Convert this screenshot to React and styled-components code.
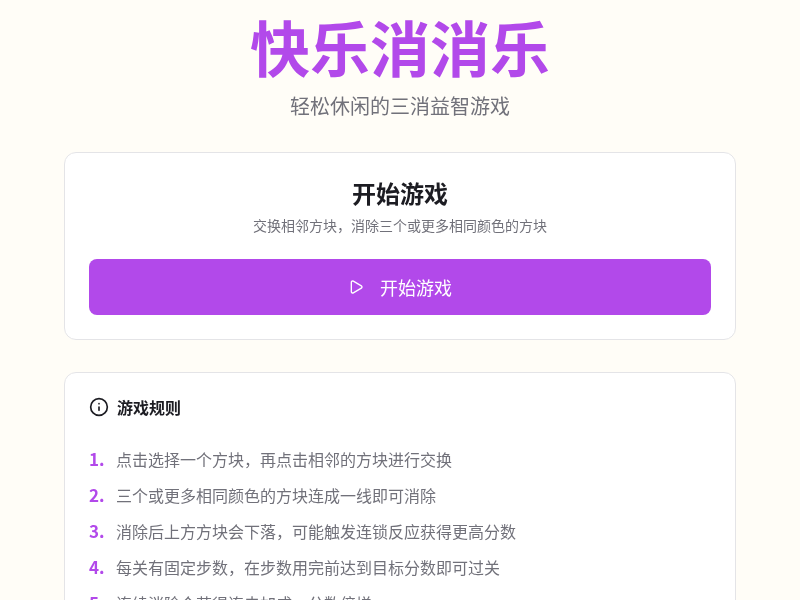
import styled, { createGlobalStyle } from "styled-components";
import { Play, Info } from "lucide-react";

const Global = createGlobalStyle`
    * { box-sizing: border-box; }
    html, body { margin: 0; padding: 0; }
    body {
        background: #fffdf7;
        color: #1c1c22;
        font-family: "Noto Sans CJK SC", "Noto Sans", sans-serif;
    }
`;

const Page = styled.main`
    display: flex;
    flex-direction: column;
    align-items: center;
    padding: 16px 0 32px;
    will-change: transform;
`;

const Header = styled.header`
    text-align: center;
    margin-bottom: 32px;
`;

const Title = styled.h1`
    margin: 0 0 16px;
    font-size: 60px;
    line-height: 60px;
    font-weight: 700;
    color: #b249ea;
`;

const Subtitle = styled.p`
    margin: 0;
    font-size: 20px;
    line-height: 28px;
    color: #71717a;
`;

const Card = styled.section`
    width: 672px;
    background: #fff;
    border: 1px solid #e4e4e7;
    border-radius: 12px;
    padding: 24px;
    margin-bottom: 32px;
`;

const CardHead = styled.div`
    text-align: center;
    margin-bottom: 24px;
`;

const CardTitle = styled.h2`
    margin: 0 0 6px;
    font-size: 24px;
    line-height: 32px;
    font-weight: 700;
`;

const CardText = styled.p`
    margin: 0;
    font-size: 14px;
    line-height: 20px;
    color: #71717a;
`;

const StartButton = styled.button`
    display: flex;
    align-items: center;
    justify-content: center;
    gap: 16px;
    width: 100%;
    height: 56px;
    border: 0;
    border-radius: 8px;
    background: #b249ea;
    color: #fff;
    font-family: inherit;
    font-size: 18px;
    line-height: 28px;
`;

const RulesTitle = styled.h3`
    display: flex;
    align-items: center;
    gap: 8px;
    margin: -2px 0 28px;
    font-size: 16px;
    line-height: 24px;
    font-weight: 700;
`;

const RulesList = styled.ol`
    display: flex;
    flex-direction: column;
    gap: 12px;
    margin: 0;
    padding: 0;
    list-style: none;
`;

const Rule = styled.li`
    display: flex;
    gap: 12px;
    font-size: 16px;
    line-height: 24px;
    color: #71717a;
`;

const RuleNumber = styled.span`
    width: 15px;
    font-size: 17px;
    font-weight: 700;
    color: #b249ea;
`;

const rules = [
    "点击选择一个方块，再点击相邻的方块进行交换",
    "三个或更多相同颜色的方块连成一线即可消除",
    "消除后上方方块会下落，可能触发连锁反应获得更高分数",
    "每关有固定步数，在步数用完前达到目标分数即可过关",
    "连续消除会获得连击加成，分数倍增",
];

export default function App() {
    return (
        <Page>
            <Global />
            <Header>
                <Title>快乐消消乐</Title>
                <Subtitle>轻松休闲的三消益智游戏</Subtitle>
            </Header>
            <Card>
                <CardHead>
                    <CardTitle>开始游戏</CardTitle>
                    <CardText>交换相邻方块，消除三个或更多相同颜色的方块</CardText>
                </CardHead>
                <StartButton>
                    <Play size={16} strokeWidth={2} />
                    开始游戏
                </StartButton>
            </Card>
            <Card>
                <RulesTitle>
                    <Info size={20} strokeWidth={2} />
                    游戏规则
                </RulesTitle>
                <RulesList>
                    {rules.map((rule, i) => (
                        <Rule key={rule}>
                            <RuleNumber>{i + 1}.</RuleNumber>
                            <span>{rule}</span>
                        </Rule>
                    ))}
                </RulesList>
            </Card>
        </Page>
    );
}
